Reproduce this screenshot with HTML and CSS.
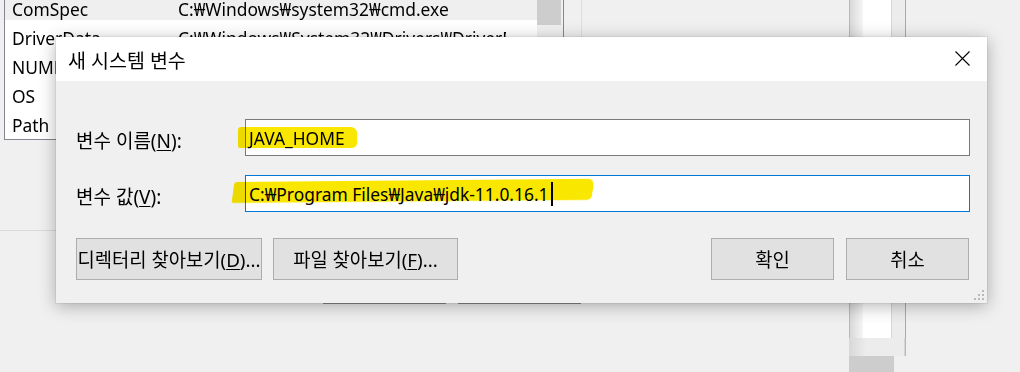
FILE: index.html
```html
<!DOCTYPE html>
<html lang="ko">
<head>
  <meta charset="UTF-8">
  <title>새 시스템 변수</title>
  <link rel="stylesheet" href="styles.css">
</head>
<body>
  <div class="desk">
    <div class="parent">
      <div class="main">
        <div class="top-row">
          <div class="listbox">
            <div class="rows">
              <div class="row hot"><span class="name">ComSpec</span><span class="value">C:₩Windows₩system32₩cmd.exe</span></div>
              <div class="row"><span class="name">DriverData</span><span class="value">C:₩Windows₩System32₩Drivers₩DriverData</span></div>
              <div class="row"><span class="name">NUMBER_OF_PROCESSORS</span></div>
              <div class="row"><span class="name">OS</span></div>
              <div class="row"><span class="name">Path</span></div>
            </div>
            <div class="scrollbar"><div class="thumb"></div></div>
          </div>
          <div class="vrule"></div>
        </div>
        <div class="separator"></div>
        <div class="parent-buttons">
          <div class="pbtn"></div>
          <div class="pbtn"></div>
        </div>
      </div>
      <div class="side">
        <div class="side-top">
          <div class="shade"></div>
          <div class="well"></div>
          <div class="edge"></div>
        </div>
        <div class="side-gap"></div>
        <div class="side-block"></div>
      </div>
    </div>

    <div class="dialog">
      <div class="titlebar">
        <span class="title">새 시스템 변수</span>
        <svg class="close" width="15" height="15" viewBox="0 0 15 15">
          <path d="M0.5 0.5 L14.5 14.5 M14.5 0.5 L0.5 14.5" stroke="#000" stroke-width="1.1" fill="none"/>
        </svg>
      </div>
      <div class="content">
        <div class="form">
          <label class="label">변수 이름(<u>N</u>):</label>
          <div class="field">
            <span class="text">JAVA_HOME</span>
            <span class="marker marker-name"></span>
          </div>
          <label class="label">변수 값(<u>V</u>):</label>
          <div class="field focus">
            <span class="text">C:₩Program Files₩Java₩jdk-11.0.16.1</span><span class="caret"></span>
            <span class="marker marker-value"></span>
          </div>
        </div>
        <div class="buttons">
          <div class="group">
            <button class="btn wide1">디렉터리 찾아보기(<u>D</u>)...</button>
            <button class="btn wide2">파일 찾아보기(<u>F</u>)...</button>
          </div>
          <div class="group right">
            <button class="btn small">확인</button>
            <button class="btn small">취소</button>
          </div>
        </div>
        <svg class="grip" width="12" height="12" viewBox="0 0 12 12">
          <rect x="9" y="1" width="2" height="2" fill="#b8b8b8"/>
          <rect x="5" y="5" width="2" height="2" fill="#b8b8b8"/>
          <rect x="9" y="5" width="2" height="2" fill="#b8b8b8"/>
          <rect x="1" y="9" width="2" height="2" fill="#b8b8b8"/>
          <rect x="5" y="9" width="2" height="2" fill="#b8b8b8"/>
          <rect x="9" y="9" width="2" height="2" fill="#b8b8b8"/>
        </svg>
      </div>
    </div>
  </div>
</body>
</html>
```

FILE: styles.css
```css
body {
  margin: 0;
  background: #f0f0f0;
  font-family: "Noto Sans", "Noto Sans CJK KR", sans-serif;
  font-size: 17.4px;
  color: #000;
  overflow: hidden;
}

.desk {
  position: relative;
  width: 1020px;
  height: 372px;
  overflow: hidden;
}

/* parent window behind the dialog */
.parent {
  display: flex;
  height: 372px;
}

.main {
  width: 849px;
}

.top-row {
  display: flex;
  align-items: flex-start;
  margin-top: -6px;
}

.listbox {
  display: flex;
  margin-left: 4px;
  width: 558px;
  border: 1px solid #828790;
  border-top: none;
  background: #fff;
}

.rows {
  width: 532px;
  overflow: hidden;
}

.row {
  display: flex;
  height: 29px;
  align-items: center;
  white-space: nowrap;
}

.row.hot {
  background: linear-gradient(#efefef 0 26px, #fff 26px);
}

.name {
  width: 166px;
  padding-left: 7px;
  overflow: hidden;
}

.value {
  width: 328px;
  overflow: hidden;
}

.scrollbar {
  width: 26px;
  background: #f0f0f0;
}

.thumb {
  width: 24px;
  height: 31px;
  background: #cdcdcd;
}

.vrule {
  width: 1px;
  height: 146px;
  margin-left: 17px;
  background: #dedede;
}

.separator {
  height: 1px;
  margin-top: 90px;
  background: #d9d9d9;
}

.parent-buttons {
  display: flex;
  gap: 12px;
  margin-top: 39px;
  padding-left: 323px;
}

.pbtn {
  width: 121px;
  height: 32px;
  border: 1px solid #8a8a8a;
  background: #e1e1e1;
}

.side {
  width: 57px;
  display: flex;
  flex-direction: column;
}

.side-top {
  display: flex;
  height: 338px;
}

.shade {
  width: 13px;
  border-left: 1px solid #b9b9b9;
  background: linear-gradient(90deg, #d8d8d8, #f6f6f6);
}

.well {
  width: 28px;
  background: #fff;
  border-right: 1px solid #d6d6d6;
}

.edge {
  flex: 1;
  background: #ececec;
  border-right: 1px solid #a9a9a9;
}

.side-gap {
  height: 18px;
  background: linear-gradient(90deg, #d8d8d8, #ececec 30%, #ececec 96%, #a9a9a9);
}

.side-block {
  width: 45px;
  height: 16px;
  background: #cdcdcd;
}

/* dialog */
.dialog {
  position: absolute;
  left: 56px;
  top: 37px;
  width: 931px;
  height: 266px;
  background: #f0f0f0;
  box-shadow: 0 0 0 1px rgba(0, 0, 0, 0.05), 0 3px 16px rgba(0, 0, 0, 0.3);
  display: flex;
  flex-direction: column;
}

.titlebar {
  height: 44px;
  background: #fff;
  display: flex;
  align-items: center;
  justify-content: space-between;
  padding: 0 17px 0 12px;
}

.title {
  font-size: 19.5px;
}

.close {
  display: block;
  margin-top: -1px;
}

.content {
  position: relative;
  flex: 1;
  padding: 38px 17px 23px 20px;
}

.form {
  display: grid;
  grid-template-columns: 169px 1fr;
  row-gap: 19px;
  align-items: center;
}

.label {
  font-size: 19px;
  padding-top: 4px;
}

.label u, .btn u {
  text-decoration-thickness: 1px;
  text-underline-offset: 2px;
}

.field {
  position: relative;
  height: 35px;
  border: 1px solid #7a7a7a;
  background: #fff;
  display: flex;
  align-items: center;
  padding-left: 3px;
  white-space: nowrap;
}

.field.focus {
  border-color: #0078d7;
}

.caret {
  width: 2px;
  height: 24px;
  margin-left: 2px;
  background: #000;
}

.marker {
  position: absolute;
  background: #fae700;
  mix-blend-mode: multiply;
  border-radius: 3px 6px 5px 2px;
}

.marker-name {
  left: -8px;
  top: 7px;
  width: 119px;
  height: 21px;
}

.marker-value {
  left: -13px;
  top: 6px;
  width: 360px;
  height: 21px;
  transform: rotate(-0.5deg) skewX(-8deg);
  transform-origin: left center;
}

.buttons {
  display: flex;
  justify-content: space-between;
  margin-top: 26px;
}

.group {
  display: flex;
  gap: 11px;
}

.group.right {
  gap: 12px;
  margin-right: 1px;
}

.btn {
  height: 42px;
  border: 1px solid #adadad;
  background: #e1e1e1;
  font-family: inherit;
  font-size: 18.8px;
  color: #000;
  padding: 0;
  white-space: nowrap;
}

.wide1 {
  width: 186px;
}

.wide2 {
  width: 185px;
}

.small {
  width: 123px;
}

.grip {
  position: absolute;
  right: 2px;
  bottom: 2px;
}
```
